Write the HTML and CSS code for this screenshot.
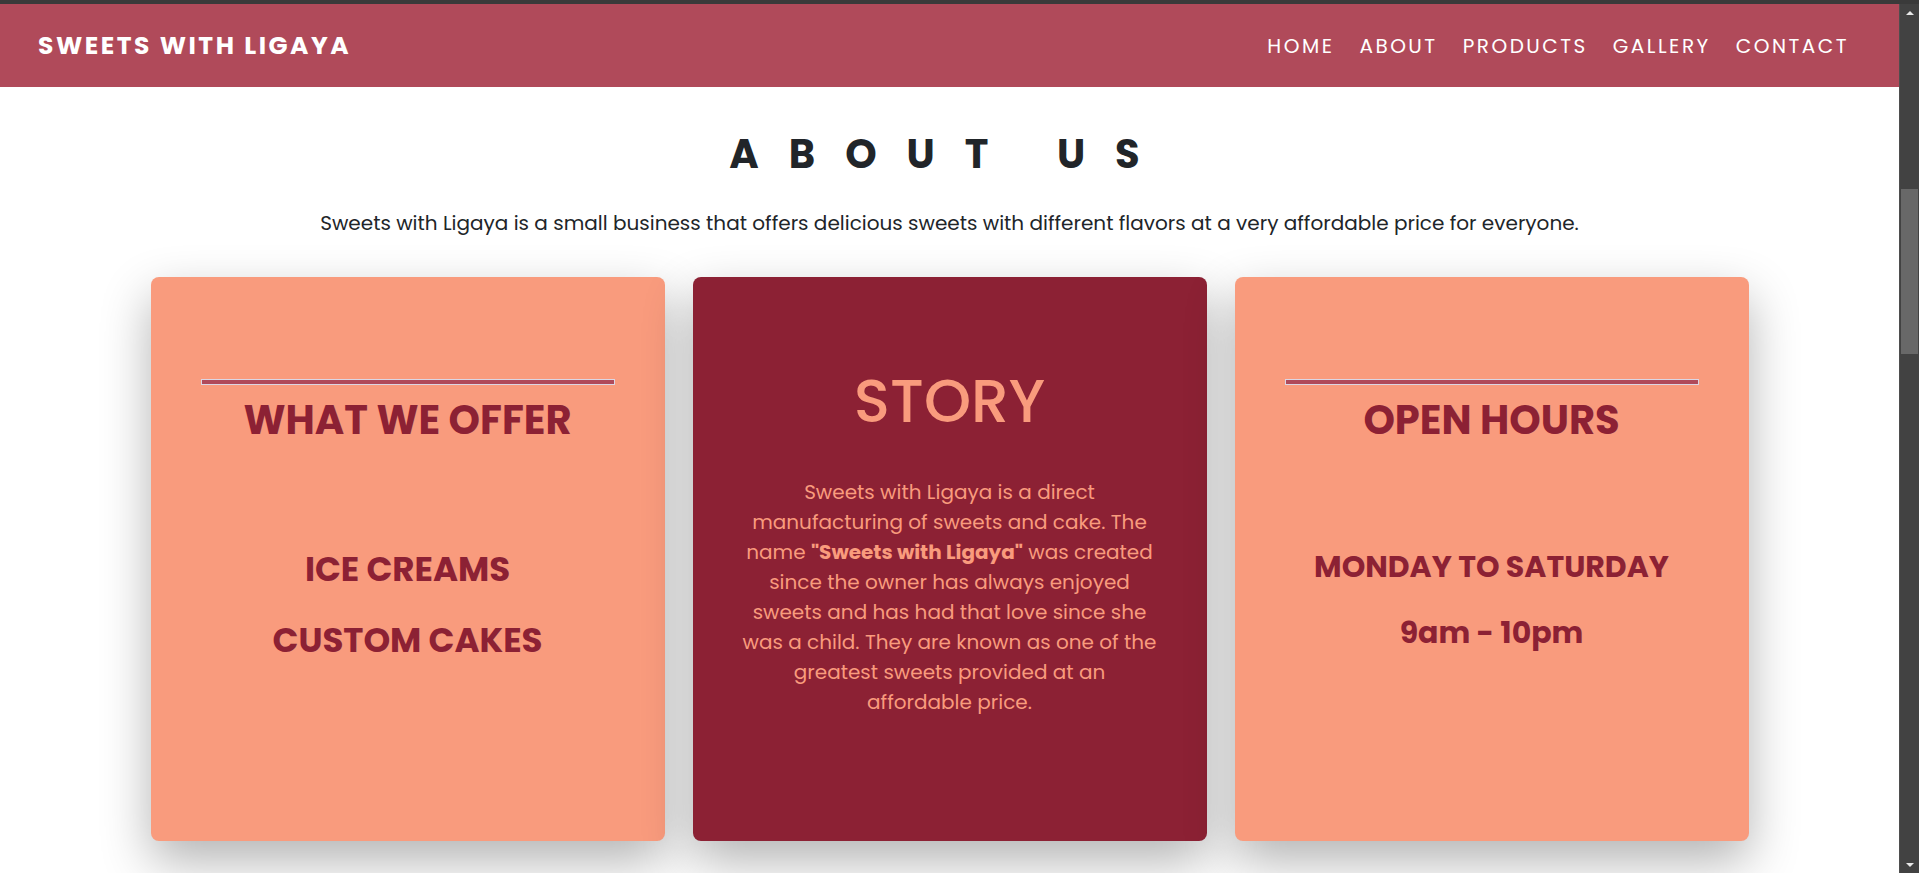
FILE: index.html
```html
<!DOCTYPE html>
<html lang="en">
<head>
<meta charset="utf-8">
<title>Sweets with Ligaya - About</title>
<link rel="stylesheet" href="styles.css">
</head>
<body>
<div class="topstrip"></div>
<div class="frame">
  <div class="page">
    <header class="header">
      <div class="logo">SWEETS WITH LIGAYA</div>
      <nav class="nav">
        <a href="#">HOME</a>
        <a href="#">ABOUT</a>
        <a href="#">PRODUCTS</a>
        <a href="#">GALLERY</a>
        <a href="#">CONTACT</a>
      </nav>
    </header>
    <main class="about">
      <h1 class="about-title">ABOUT US</h1>
      <p class="about-sub">Sweets with Ligaya is a small business that offers delicious sweets with different flavors at a very affordable price for everyone.</p>
      <div class="cards">
        <section class="card card-light">
          <hr class="card-rule">
          <h2 class="card-title">WHAT WE OFFER</h2>
          <div class="card-list">
            <h3 class="card-item">ICE CREAMS</h3>
            <h3 class="card-item">CUSTOM CAKES</h3>
          </div>
        </section>
        <section class="card card-dark">
          <h2 class="story-title">STORY</h2>
          <p class="story-text">Sweets with Ligaya is a direct manufacturing of sweets and cake. The name <b>"Sweets with Ligaya"</b> was created since the owner has always enjoyed sweets and has had that love since she was a child. They are known as one of the greatest sweets provided at an affordable price.</p>
        </section>
        <section class="card card-light">
          <hr class="card-rule">
          <h2 class="card-title">OPEN HOURS</h2>
          <div class="card-list hours">
            <h3 class="card-item">MONDAY TO SATURDAY</h3>
            <h3 class="card-item">9am - 10pm</h3>
          </div>
        </section>
      </div>
    </main>
  </div>
  <div class="scrollbar">
    <div class="sb-arrow sb-up"></div>
    <div class="sb-track"><div class="sb-thumb"></div></div>
    <div class="sb-arrow sb-down"></div>
  </div>
</div>
</body>
</html>
```

FILE: styles.css
```css
* { box-sizing: border-box; }
html, body { margin: 0; padding: 0; }
body {
  width: 1919px;
  height: 873px;
  overflow: hidden;
  background: #ffffff;
  font-family: "Poppins", "Inter", "Open Sans", sans-serif;
  display: flex;
  flex-direction: column;
}
.topstrip {
  height: 4px;
  background: #3a3a3a;
  flex: none;
}
.frame {
  flex: 1;
  display: flex;
  min-height: 0;
}
.page {
  flex: 1;
  min-width: 0;
  overflow: hidden;
  background: #ffffff;
}
.header {
  height: 83px;
  background: #b04a5a;
  display: flex;
  align-items: center;
  justify-content: space-between;
  padding: 0 50px 0 38px;
}
.logo {
  color: #ffffff;
  font-weight: 700;
  font-size: 25px;
  letter-spacing: 2.5px;
}
.nav {
  display: flex;
  gap: 25px;
}
.nav a {
  color: #ffffff;
  text-decoration: none;
  font-size: 20px;
  letter-spacing: 2.5px;
  font-weight: 400;
}
.about {
  display: flex;
  flex-direction: column;
  align-items: center;
}
.about-title {
  margin: 34px 0 0;
  font-size: 40px;
  line-height: 66px;
  font-weight: 700;
  letter-spacing: 30px;
  color: #212529;
}
.about-sub {
  margin: 21px 0 0;
  font-size: 20px;
  line-height: 30px;
  color: #212529;
}
.cards {
  display: flex;
  justify-content: center;
  gap: 28px;
  margin-top: 39px;
}
.card {
  width: 514px;
  height: 564px;
  border-radius: 8px;
  box-shadow: 0 20px 50px rgba(0, 0, 0, 0.3);
  text-align: center;
  padding: 102px 50px 0;
  display: flex;
  flex-direction: column;
  align-items: center;
}
.card-light {
  background: #f99b7d;
  color: #8c2134;
}
.card-dark {
  background: #8c2134;
  color: #f99b7d;
  padding: 88px 47px 0;
}
.card-rule {
  width: 100%;
  height: 6px;
  margin: 0;
  border: 1px solid #dcd6e4;
  background: #b04a5a;
}
.card-title {
  margin: 11px 0 0;
  font-size: 40px;
  line-height: 48px;
  font-weight: 700;
}
.card-list {
  margin-top: 105px;
  display: flex;
  flex-direction: column;
  gap: 31px;
}
.card-item {
  margin: 0;
  font-size: 34px;
  line-height: 40px;
  font-weight: 700;
}
.card-list.hours { gap: 30px; }
.hours .card-item {
  font-size: 30px;
  line-height: 36px;
}
.story-title {
  margin: 0;
  font-size: 60px;
  line-height: 72px;
  font-weight: 500;
}
.story-text {
  margin: 40px 0 0;
  font-size: 20px;
  line-height: 30px;
}
.story-text b { font-weight: 700; }
.scrollbar {
  width: 20px;
  flex: none;
  background: #424242;
  border-left: 1px solid #4e4e4e;
  display: flex;
  flex-direction: column;
  align-items: center;
}
.sb-arrow {
  width: 0;
  height: 0;
  border-left: 4px solid transparent;
  border-right: 4px solid transparent;
  flex: none;
}
.sb-up {
  margin-top: 7px;
  border-bottom: 4px solid #e8e8e8;
}
.sb-down {
  margin-bottom: 6px;
  border-top: 4px solid #e8e8e8;
}
.sb-track {
  flex: 1;
  width: 100%;
  padding: 174px 1px 0 1px;
}
.sb-thumb {
  height: 165px;
  background: #686868;
}
```
